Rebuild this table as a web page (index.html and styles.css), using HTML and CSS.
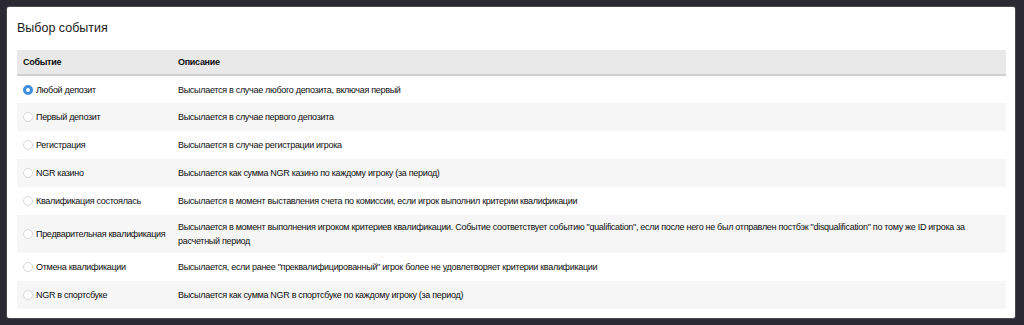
FILE: index.html
```html
<!DOCTYPE html>
<html lang="ru">
<head>
<meta charset="utf-8">
<link rel="stylesheet" href="styles.css">
</head>
<body>
<div class="card">
  <h2 class="title">Выбор события</h2>
  <table class="events">
    <thead>
      <tr><th class="c-event">Событие</th><th class="c-desc">Описание</th></tr>
    </thead>
    <tbody>
      <tr><td><span class="radio checked"></span>Любой депозит</td><td>Высылается в случае любого депозита, включая первый</td></tr>
      <tr><td><span class="radio"></span>Первый депозит</td><td>Высылается в случае первого депозита</td></tr>
      <tr><td><span class="radio"></span>Регистрация</td><td>Высылается в случае регистрации игрока</td></tr>
      <tr><td><span class="radio"></span>NGR казино</td><td>Высылается как сумма NGR казино по каждому игроку (за период)</td></tr>
      <tr><td><span class="radio"></span>Квалификация состоялась</td><td>Высылается в момент выставления счета по комиссии, если игрок выполнил критерии квалификации</td></tr>
      <tr><td><span class="radio"></span>Предварительная квалификация</td><td>Высылается в момент выполнения игроком критериев квалификации. Событие соответствует событию "qualification", если после него не был отправлен постбэк "disqualification" по тому же ID игрока за расчетный период</td></tr>
      <tr><td><span class="radio"></span>Отмена квалификации</td><td>Высылается, если ранее "преквалифицированный" игрок более не удовлетворяет критерии квалификации</td></tr>
      <tr><td><span class="radio"></span>NGR в спортсбуке</td><td>Высылается как сумма NGR в спортсбуке по каждому игроку (за период)</td></tr>
    </tbody>
  </table>
</div>
</body>
</html>
```

FILE: styles.css
```css
html, body {
  margin: 0;
  padding: 0;
}
body {
  background: #2b2a33;
  padding: 7px 9px 7px 7px;
  font-family: "Liberation Sans", Arial, sans-serif;
  color: #0d0d0d;
}
.card {
  background: #fff;
  border-radius: 2px;
  padding: 14px 9px 9px 10px;
  box-shadow: 0 0 0 1px rgba(255,255,255,0.15);
}
.title {
  margin: 0 0 14px 0;
  font-size: 12.5px;
  font-weight: normal;
  line-height: 15px;
  color: #1a1a1a;
}
.events {
  width: 100%;
  border-collapse: collapse;
  font-size: 9px;
  letter-spacing: -0.3px;
  table-layout: fixed;
}
.events th {
  background: #e9e9e9;
  border-bottom: 2px solid #cfcfcf;
  text-align: left;
  font-weight: bold;
  height: 24px;
  padding: 0 6px;
  line-height: 12px;
}
.events th.c-event {
  width: 141px;
}
.events th.c-desc {
  padding-left: 8px;
}
.events tbody tr {
  height: 28px;
}
.events td {
  padding: 5px 6px;
  line-height: 14px;
  vertical-align: middle;
}
.events td:first-child {
  white-space: nowrap;
}
.events td + td {
  padding-left: 8px;
  padding-right: 20px;
}
.events tbody tr:nth-child(even) td {
  background: #f6f6f6;
}
.radio {
  display: inline-block;
  box-sizing: border-box;
  width: 10px;
  height: 10px;
  border: 1px solid #d9d9d9;
  border-radius: 50%;
  margin-right: 3px;
  vertical-align: -2px;
  background: #fff;
}
.radio.checked {
  border: 3px solid #3d8fe0;
}
```
